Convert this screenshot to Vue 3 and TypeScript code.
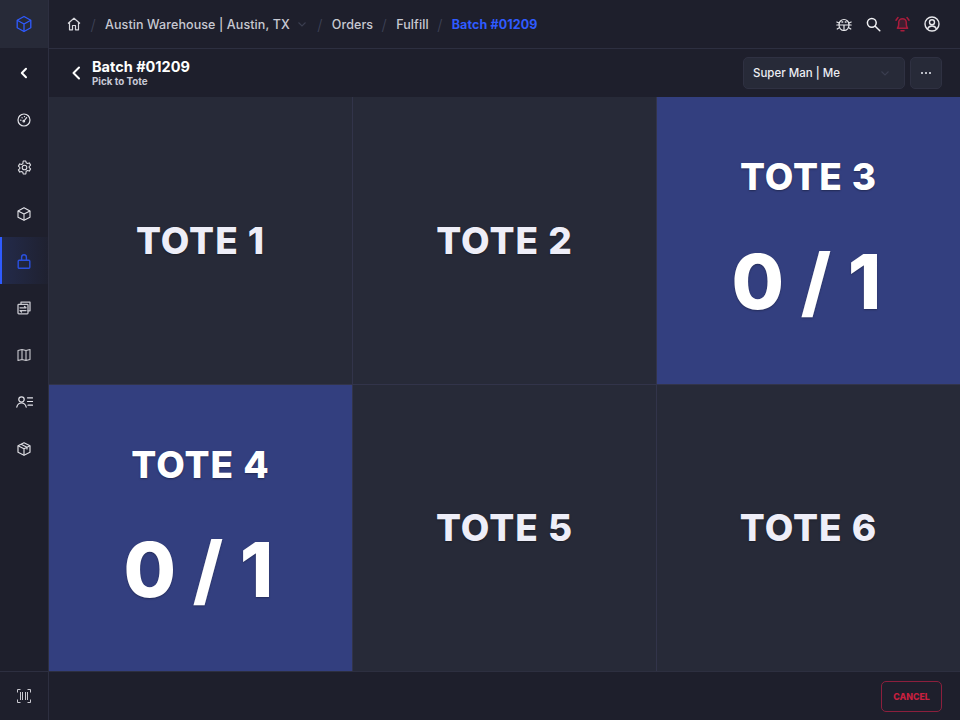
<script setup lang="ts">
interface Tote {
  name: string
  count?: string
}

const totes: Tote[] = [
  { name: 'TOTE 1' },
  { name: 'TOTE 2' },
  { name: 'TOTE 3', count: '0 / 1' },
  { name: 'TOTE 4', count: '0 / 1' },
  { name: 'TOTE 5' },
  { name: 'TOTE 6' },
]
</script>

<template>
  <div class="app">
    <aside class="sidebar">
      <div class="logo">
        <svg width="18" height="18" viewBox="0 0 18 18" fill="none" stroke="#2f5bff" stroke-width="1.3" stroke-linejoin="round">
          <path d="M9 1.5 15.8 5.2v7.6L9 16.5 2.2 12.8V5.2z" />
          <path d="M2.2 5.2 9 9l6.8-3.8M9 9v7.5" />
        </svg>
      </div>
      <div class="side-back">
        <svg width="12" height="12" viewBox="0 0 12 12" fill="none" stroke="#fff" stroke-width="2" stroke-linecap="round" stroke-linejoin="round">
          <path d="M8 1.8 3.8 6 8 10.2" />
        </svg>
      </div>
      <nav class="nav">
        <div class="nav-item">
          <svg width="14" height="14" viewBox="0 0 14 14" fill="none" stroke="#e4e4ea" stroke-width="1.2" stroke-linecap="round">
            <circle cx="7" cy="7" r="6" />
            <path d="M7 8 9.6 4.6M3.6 7.2h.4M5 4.6l.2.2M7.4 3.6h.2" />
            <circle cx="6.8" cy="8.2" r=".8" />
          </svg>
        </div>
        <div class="nav-item">
          <svg width="15" height="15" viewBox="0 0 15 15" fill="none" stroke="#dcdce2" stroke-width="1.1" stroke-linejoin="round">
            <path d="M6.2 1h2.6l.4 1.8 1.3.7 1.8-.6 1.3 2.2-1.4 1.2v1.4l1.4 1.2-1.3 2.2-1.8-.6-1.3.7L8.8 14H6.2l-.4-1.8-1.3-.7-1.8.6L1.4 9.9l1.4-1.2V7.3L1.4 6.1l1.3-2.2 1.8.6 1.3-.7z" />
            <circle cx="7.5" cy="7.5" r="2.3" />
          </svg>
        </div>
        <div class="nav-item">
          <svg width="14" height="14" viewBox="0 0 14 14" fill="none" stroke="#e4e4ea" stroke-width="1.1" stroke-linejoin="round">
            <path d="M7 .8 13 4v6.2l-6 3-6-3V4z" />
            <path d="M1 4l6 3 6-3M7 7v6.2" />
          </svg>
        </div>
        <div class="nav-item active">
          <svg width="14" height="15" viewBox="0 0 14 15" fill="none" stroke="#2a50e0" stroke-width="1.4" stroke-linejoin="round">
            <rect x="1.2" y="6.2" width="11.6" height="8" rx="1" />
            <path d="M4.6 6.2V3.2a2.4 2.4 0 0 1 4.8 0v3" />
          </svg>
        </div>
        <div class="nav-item">
          <svg width="14" height="14" viewBox="0 0 14 14" fill="none" stroke="#c9c9d0" stroke-width="1.3" stroke-linecap="round" stroke-linejoin="round">
            <path d="M4 3V1.2h9v8.600h-2" />
            <rect x="1" y="3.4" width="10" height="9.4" rx=".8" />
            <path d="M3 6.800h6L7.500 5.400M9 9.600H3l1.500 1.400" />
          </svg>
        </div>
        <div class="nav-item">
          <svg width="14" height="14" viewBox="0 0 14 14" fill="none" stroke="#c9c9d0" stroke-width="1.1" stroke-linejoin="round">
            <path d="M1 2.500 5 1.500l4 1 4-1v10l-4 1-4-1-4 1zM5 1.500v10M9 2.500v10" />
          </svg>
        </div>
        <div class="nav-item">
          <svg width="17" height="12" viewBox="0 0 17 12" fill="none" stroke="#e4e4ea" stroke-width="1.2" stroke-linecap="round">
            <circle cx="5.500" cy="3.500" r="2.700" />
            <path d="M.8 11.200c.5-2.700 2.300-4.200 4.700-4.200s4.200 1.500 4.700 4.200" />
            <path d="M11.500 1.800h5M11.500 5.500h5M12 9.200h4.500" />
          </svg>
        </div>
        <div class="nav-item">
          <svg width="14" height="14" viewBox="0 0 14 14" fill="none" stroke="#dcdce2" stroke-width="1.2" stroke-linejoin="round">
            <path d="M7 .8 13 3.800v6.400l-6 3-6-3V3.800z" />
            <path d="M1 3.800l6 3 6-3M7 6.800v6.400M4 2.300l6 3v2.200" />
          </svg>
        </div>
      </nav>
      <div class="scan">
        <svg width="14" height="14" viewBox="0 0 14 14" fill="none" stroke="#c9c9d0" stroke-width="1">
          <path d="M.5 3.500v-3h3M10.500.500h3v3M.5 10.500v3h3M10.500 13.500h3v-3" />
          <path d="M3.500 3v8M5.500 3v8M8.500 3v8M10.500 3v8" />
        </svg>
      </div>
    </aside>

    <div class="main">
      <header class="topbar">
        <svg class="home" width="14" height="14" viewBox="0 0 14 14" fill="none" stroke="#d8d8de" stroke-width="1.2" stroke-linejoin="round">
          <path d="M1 6.500 7 1.200l6 5.300M2.500 5.500v7.300h3V8.500h3v4.300h3V5.500" />
        </svg>
        <span class="sep">/</span>
        <span class="crumb">Austin Warehouse | Austin, TX</span>
        <svg class="crumb-caret" width="8" height="5" viewBox="0 0 8 5" fill="none" stroke="#3b3e50" stroke-width="1.1">
          <path d="M.5.500 4 4 7.500.500" />
        </svg>
        <span class="sep">/</span>
        <span class="crumb">Orders</span>
        <span class="sep">/</span>
        <span class="crumb">Fulfill</span>
        <span class="sep">/</span>
        <span class="crumb current">Batch #01209</span>

        <div class="top-icons">
          <svg width="16" height="15" viewBox="0 0 16 15" fill="none" stroke="#e8e8ec" stroke-width="1.2" stroke-linecap="round">
            <path d="M3 7.500a5 5 0 0 1 10 0c0 3.500-2 6-5 6s-5-2.500-5-6z" />
            <path d="M3.200 8h9.600M8 8v5.500M.8 5l2.400 1M15.200 5l-2.400 1M.8 8h2.200M15.200 8H13M1.200 12l2.400-1.400M14.800 12l-2.400-1.400" />
            <path d="M6 5h.6M9.400 5h.6" stroke-width="1.6" />
          </svg>
          <svg width="15" height="15" viewBox="0 0 15 15" fill="none" stroke="#f2f2f5" stroke-width="1.5" stroke-linecap="round">
            <circle cx="5.800" cy="5.800" r="4.400" />
            <path d="M9.200 9.200 13.800 13.800" />
          </svg>
          <svg width="15" height="16" viewBox="0 0 15 16" fill="rgba(168, 28, 60, 0.25)" stroke="#a81c3c" stroke-width="1.5" stroke-linecap="round" stroke-linejoin="round">
            <path d="M2.400 12.200c.9-1 1.300-2 1.300-4V6.500a3.800 3.800 0 0 1 7.600 0v1.700c0 2 .4 3 1.300 4z" />
            <path d="M6 14.800h3M1 4.200 3 1.500M14 4.200 12 1.500" />
          </svg>
          <svg width="16" height="16" viewBox="0 0 16 16" fill="none" stroke="#e8e8ec" stroke-width="1.4">
            <circle cx="8" cy="8" r="7" />
            <circle cx="8" cy="6.300" r="2.500" />
            <path d="M3.500 13c.8-2 2.500-3 4.500-3s3.700 1 4.500 3" />
          </svg>
        </div>
      </header>

      <div class="subbar">
        <svg class="back" width="12" height="16" viewBox="0 0 12 16" fill="none" stroke="#fff" stroke-width="2" stroke-linecap="round" stroke-linejoin="round">
          <path d="M9 2.500 3.500 8 9 13.500" />
        </svg>
        <div class="title-block">
          <div class="title">Batch #01209</div>
          <div class="subtitle">Pick to Tote</div>
        </div>
        <div class="select">
          <span>Super Man | Me</span>
          <svg width="8" height="5" viewBox="0 0 8 5" fill="none" stroke="#3b3e50" stroke-width="1.1">
            <path d="M.5.500 4 4 7.500.500" />
          </svg>
        </div>
        <div class="more">
          <i /><i /><i />
        </div>
      </div>

      <section class="grid">
        <div v-for="tote in totes" :key="tote.name" class="tote" :class="{ open: tote.count }">
          <div class="tote-name">{{ tote.name }}</div>
          <div v-if="tote.count" class="tote-count">{{ tote.count }}</div>
        </div>
      </section>

      <footer class="footer">
        <button class="cancel" type="button">CANCEL</button>
      </footer>
    </div>
  </div>
</template>

<style>
html,
body {
  margin: 0;
  background: #1e1f2c;
}
</style>

<style scoped>
.app {
  display: flex;
  width: 960px;
  height: 720px;
  overflow: hidden;
  background: #1e1f2c;
  color: #fff;
  font-family: Inter, "Liberation Sans", sans-serif;
}
.sidebar {
  display: flex;
  flex-direction: column;
  flex: none;
  width: 48px;
  border-right: 1px solid #2d2f40;
}
.logo {
  display: flex;
  align-items: center;
  justify-content: center;
  height: 48px;
  background: #272a38;
}
.side-back {
  display: flex;
  align-items: center;
  justify-content: center;
  height: 48px;
  padding-top: 2px;
  box-sizing: border-box;
}
.nav {
  display: flex;
  flex-direction: column;
  flex: 1;
}
.nav-item {
  display: flex;
  align-items: center;
  justify-content: center;
  height: 47px;
  padding-top: 1px;
  box-sizing: border-box;
}
.nav-item.active {
  border-left: 2px solid #2f5bff;
  padding-right: 2px;
  background: linear-gradient(90deg, #232a4a, #1f2130);
}
.scan {
  display: flex;
  align-items: center;
  justify-content: center;
  height: 49px;
  border-top: 1px solid #2d2f40;
  box-sizing: border-box;
}
.main {
  display: flex;
  flex-direction: column;
  flex: 1;
  min-width: 0;
}
.topbar {
  display: flex;
  align-items: center;
  flex: none;
  height: 48px;
  padding: 0 20px 0 18px;
  border-bottom: 1px solid #2d2f40;
}
.home {
  margin-right: 9px;
}
.sep {
  width: 6px;
  margin-right: 9px;
  color: #3f4358;
  font-size: 15px;
  font-weight: 300;
  text-align: center;
}
.crumb {
  margin-right: 8px;
  color: #c8c9d2;
  font-size: 12.5px;
  font-weight: 500;
  letter-spacing: 0.1px;
}
.crumb-caret {
  margin: 0 11px 0 0;
}
.crumb.current {
  margin-right: 0;
  color: #2f5bff;
  font-weight: 700;
}
.top-icons {
  display: flex;
  align-items: center;
  gap: 14px;
  margin-left: auto;
}
.subbar {
  display: flex;
  align-items: center;
  flex: none;
  height: 48px;
  padding: 0 18px 0 21px;
  box-sizing: border-box;
}
.back {
  margin-right: 10px;
}
.title-block {
  flex: 1;
  margin-top: -1px;
}
.title {
  font-size: 14.5px;
  font-weight: 700;
  line-height: 18px;
}
.subtitle {
  color: #c8c9d6;
  font-size: 9.8px;
  font-weight: 700;
  line-height: 12px;
}
.select {
  display: flex;
  align-items: center;
  justify-content: space-between;
  width: 162px;
  height: 32px;
  margin-right: 5px;
  padding: 0 15px 0 9px;
  box-sizing: border-box;
  border: 1px solid #2f3142;
  border-radius: 5px;
  background: #272a38;
  color: #eceef4;
  font-size: 11.5px;
  font-weight: 500;
}
.more {
  display: flex;
  align-items: center;
  justify-content: center;
  gap: 2px;
  width: 32px;
  height: 32px;
  box-sizing: border-box;
  border: 1px solid #2f3142;
  border-radius: 5px;
  background: #272a38;
}
.more i {
  width: 2px;
  height: 2px;
  border-radius: 50%;
  background: #eceef4;
}
.grid {
  display: grid;
  flex: 1;
  grid-template-columns: 303px 303px 1fr;
  grid-template-rows: 287px 1fr;
  gap: 1px;
  background: #32344a;
}
.tote {
  display: flex;
  flex-direction: column;
  align-items: center;
  justify-content: center;
  background: #272a38;
}
.tote.open {
  background: #333f7f;
}
.tote-name {
  color: #eeeef8;
  font-size: 37px;
  font-weight: 800;
  line-height: 44px;
  letter-spacing: 1px;
  text-shadow: 0 1px 2px rgba(0, 0, 0, 0.35);
}
.tote.open .tote-name {
  color: #fff;
}
.tote-count {
  margin: 37px 4px 0 0;
  color: #fff;
  font-size: 76px;
  font-weight: 800;
  line-height: 90px;
  text-shadow: 0 1px 2px rgba(0, 0, 0, 0.3);
}
.footer {
  display: flex;
  align-items: center;
  justify-content: flex-end;
  flex: none;
  height: 49px;
  padding-right: 18px;
  border-top: 1px solid #2d2f40;
  box-sizing: border-box;
}
.cancel {
  width: 61px;
  height: 31px;
  padding: 0;
  border: 1px solid #8c1f3d;
  border-radius: 5px;
  background: transparent;
  color: #c8203f;
  font-family: inherit;
  font-size: 8.8px;
  font-weight: 800;
}
</style>
